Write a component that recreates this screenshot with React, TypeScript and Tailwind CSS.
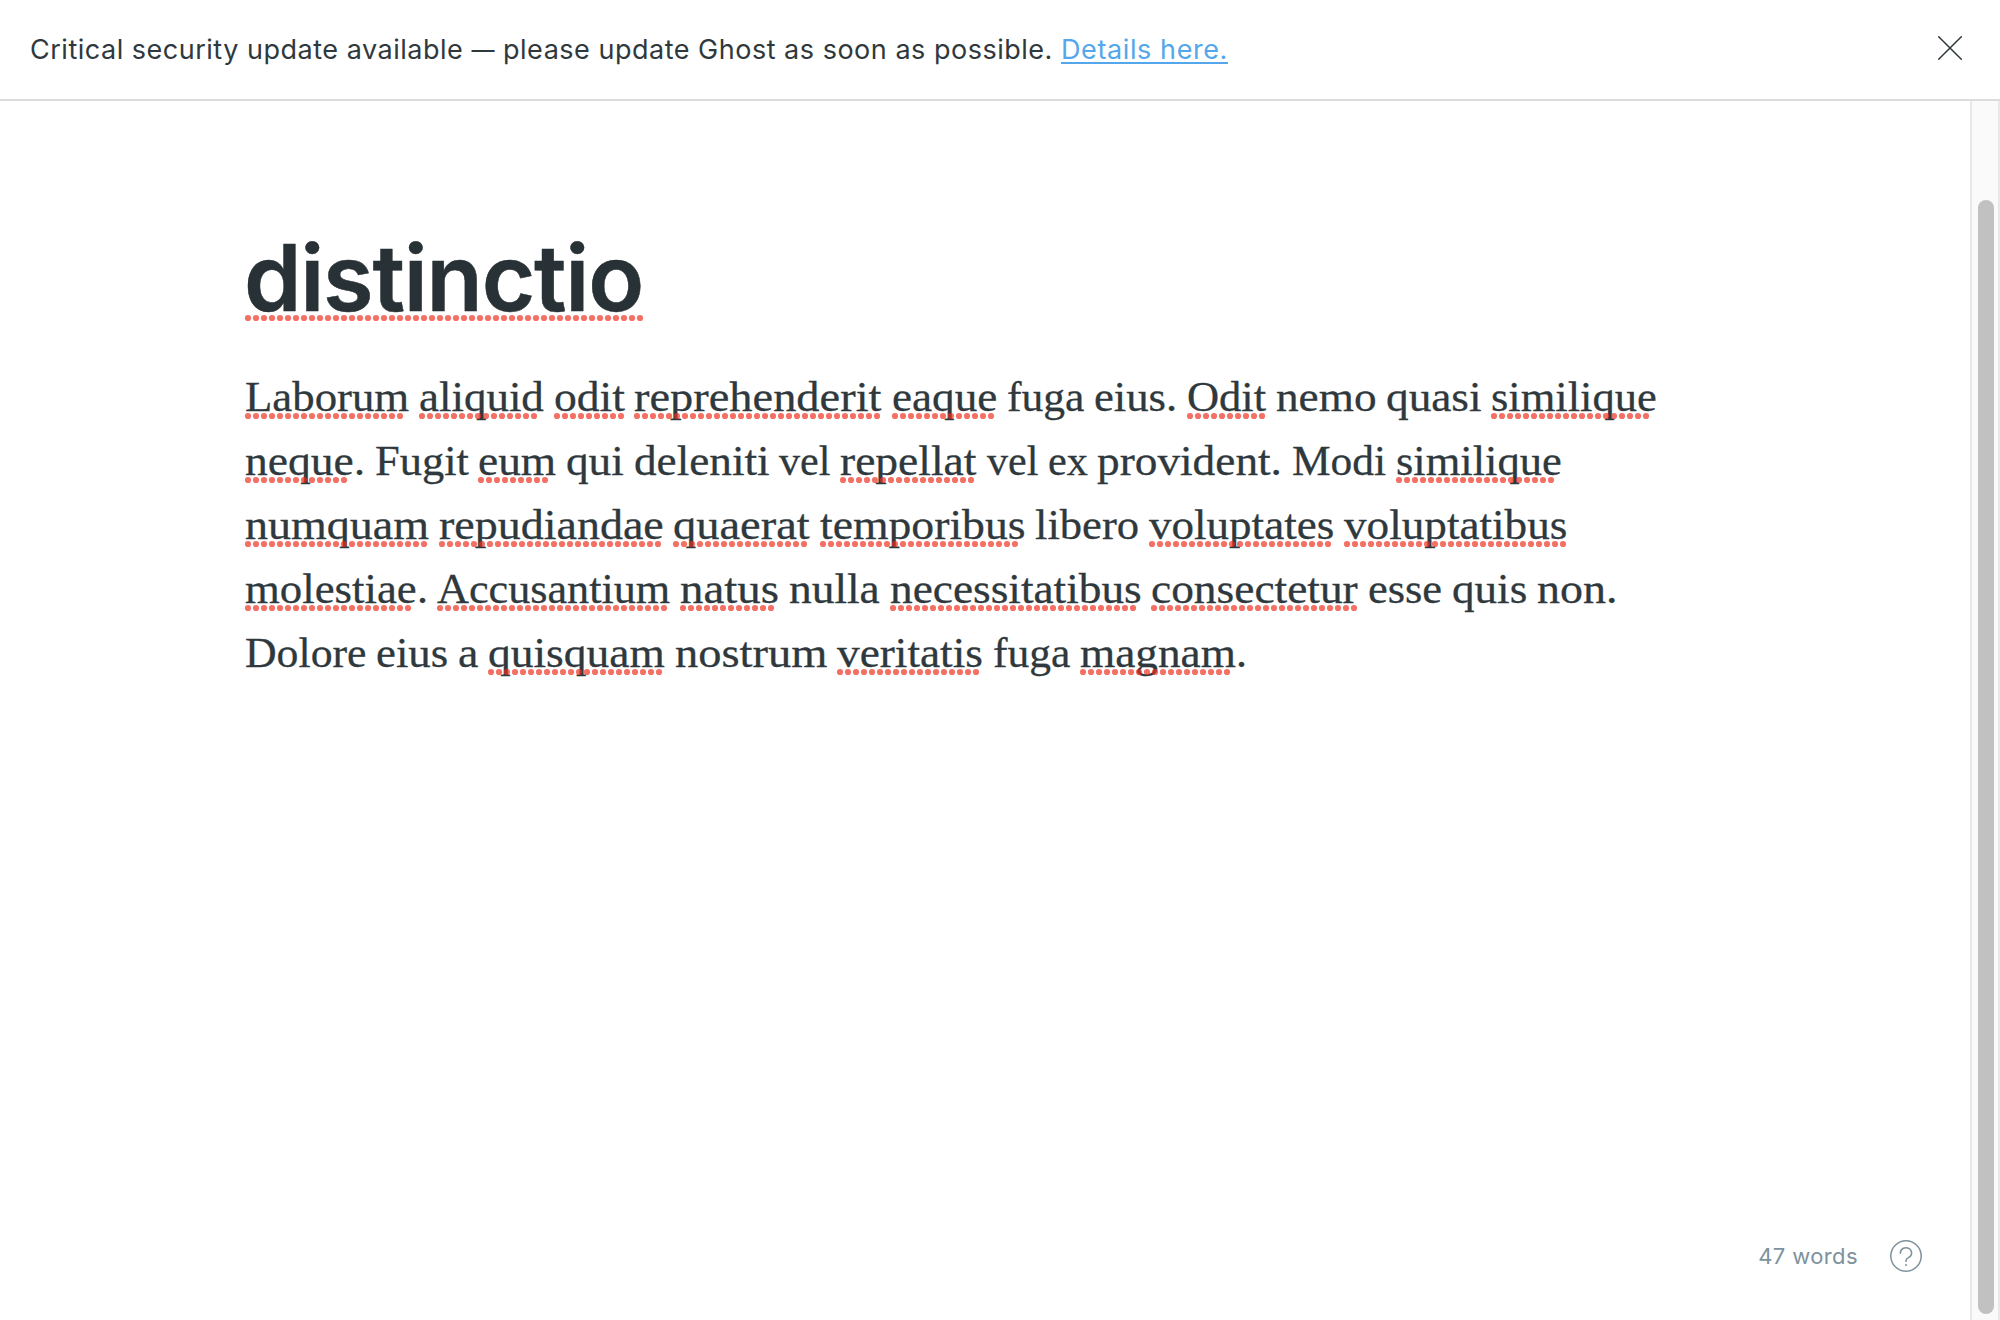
import React from "react";

const BODY_SIZE = 40;
const BODY_TRACKING = 0.19;

// Advance widths of the body face, in thousandths of an em.
const ADVANCE: Record<string, number> = {
  " ": 241, ".": 270, a: 504, b: 560, c: 454, d: 575, e: 484, f: 325, g: 510, h: 582, i: 293,
  j: 291, k: 535, l: 287, m: 880, n: 591, o: 539, p: 571, q: 560, r: 410, s: 432, t: 346,
  u: 576, v: 497, w: 738, x: 502, y: 493, z: 443, A: 671, D: 750, F: 599, L: 602, M: 927, O: 744,
};

// Words between asterisks are flagged by the spell checker.
const LINES = [
  "*Laborum* *aliquid* *odit* *reprehenderit* *eaque* fuga eius. *Odit* nemo quasi *similique*",
  "*neque*. Fugit *eum* qui deleniti vel *repellat* vel ex provident. Modi *similique*",
  "*numquam* *repudiandae* *quaerat* *temporibus* libero *voluptates* *voluptatibus*",
  "*molestiae*. *Accusantium* *natus* nulla *necessitatibus* *consectetur* esse quis non.",
  "Dolore eius a *quisquam* nostrum *veritatis* fuga *magnam*.",
];

const ctx = document.createElement("canvas").getContext("2d")!;

function advance(text: string) {
  return [...text].reduce((w, c) => w + (ADVANCE[c] * BODY_SIZE) / 1000 + BODY_TRACKING, 0);
}

function natural(text: string) {
  ctx.font = '42.5px "Liberation Serif"';
  return ctx.measureText(text).width;
}

function Dots({ width, top }: { width: number; top: string }) {
  const count = Math.floor((width + 1.5) / 8);
  return (
    <svg className={`absolute left-0 overflow-visible ${top}`} width={count * 8} height="6" aria-hidden="true">
      {Array.from({ length: count }, (_, i) => (
        <circle key={i} cx={i * 8 + 3} cy="3" r="3.1" fill="#ee2c1c" fillOpacity="0.68" />
      ))}
    </svg>
  );
}

function Word({ text, flagged }: { text: string; flagged: boolean }) {
  const width = advance(text);
  return (
    <span className="relative inline-block h-16 whitespace-pre align-top" style={{ width }}>
      <span
        className="inline-block origin-left [-webkit-text-stroke:0.3px_#2f393d]"
        style={{ transform: `scaleX(${width / natural(text)})` }}
      >
        {text}
      </span>
      {flagged && <Dots width={width} top="top-[48px]" />}
    </span>
  );
}

function Line({ source }: { source: string }) {
  const parts = source.split(/(\*[^*]+\*|[^* ]+| )/).filter(Boolean);
  return (
    <div className="h-16 whitespace-nowrap">
      {parts.map((p, i) =>
        p === " " ? (
          <span key={i} className="inline-block whitespace-pre" style={{ width: advance(" ") }}> </span>
        ) : (
          <Word key={i} text={p.replaceAll("*", "")} flagged={p.startsWith("*")} />
        ),
      )}
    </div>
  );
}

export default function App() {
  return (
    <div className="flex h-[1320px] w-[2000px] flex-col overflow-hidden bg-white font-['Inter',sans-serif] text-[#2f393d]">
      <header className="flex h-[101px] shrink-0 items-center justify-between border-b-2 border-[#dbdddd] pr-[38px] pl-[30px]">
        <p className="text-[27px] leading-[36px] tracking-[0.51px] whitespace-nowrap">
          Critical security update available <span className="relative -top-px text-[23px] leading-none">—</span> please update Ghost as soon as possible.{" "}
          <a href="#" className="tracking-[0.6px] text-[#54a7ea] underline decoration-2 underline-offset-[3px]">Details here.</a>
        </p>
        <button aria-label="Close" className="relative -top-[2px]">
          <svg width="24" height="24" viewBox="0 0 24 24" fill="none" stroke="#2f393d" strokeWidth="1.5" strokeLinecap="round">
            <path d="M.7.7 23.3 23.3M23.3.7.7 23.3" />
          </svg>
        </button>
      </header>
      <div className="flex min-h-0 flex-1">
        <main className="flex flex-1 flex-col justify-between pt-[117px] pl-[245px]">
          <div>
            <h1 className="relative h-[120px] w-[398px] text-[92px] leading-[120px] font-semibold tracking-[-1.2px] whitespace-nowrap text-[#283135] [-webkit-text-stroke:0.5px_#283135]">
              <span className="-ml-px">distinctio</span>
              <Dots width={399} top="top-[97px]" />
            </h1>
            <div className="mt-[27px] font-['Liberation_Serif',serif] text-[42.5px] leading-[64px]">
              {LINES.map((l) => <Line key={l} source={l} />)}
            </div>
          </div>
          <footer className="flex h-[128px] items-center justify-end gap-[32px] pr-[48px] text-[22px] tracking-[0.4px] text-[#7d929c]">
            <span>47 words</span>
            <svg width="32" height="32" viewBox="0 0 32 32" fill="none" stroke="#7d929c" strokeWidth="1.5" strokeLinecap="round" strokeLinejoin="round">
              <circle cx="16" cy="16" r="15.2" />
              <path d="M10.4 13.2V12.600a5.600 5.200 0 1 1 8.400 4.800c-1.900 1-2.800 1.700-2.800 3.200v.8" />
              <circle cx="16" cy="25" r="1" fill="#7d929c" stroke="none" />
            </svg>
          </footer>
        </main>
        <aside className="w-[30px] border-x-2 border-[#e8e8e8] bg-[#fafafa] pt-[99px] pl-[6px]">
          <div className="h-[1114px] w-4 rounded-full bg-[#c1c1c1]" />
        </aside>
      </div>
    </div>
  );
}
